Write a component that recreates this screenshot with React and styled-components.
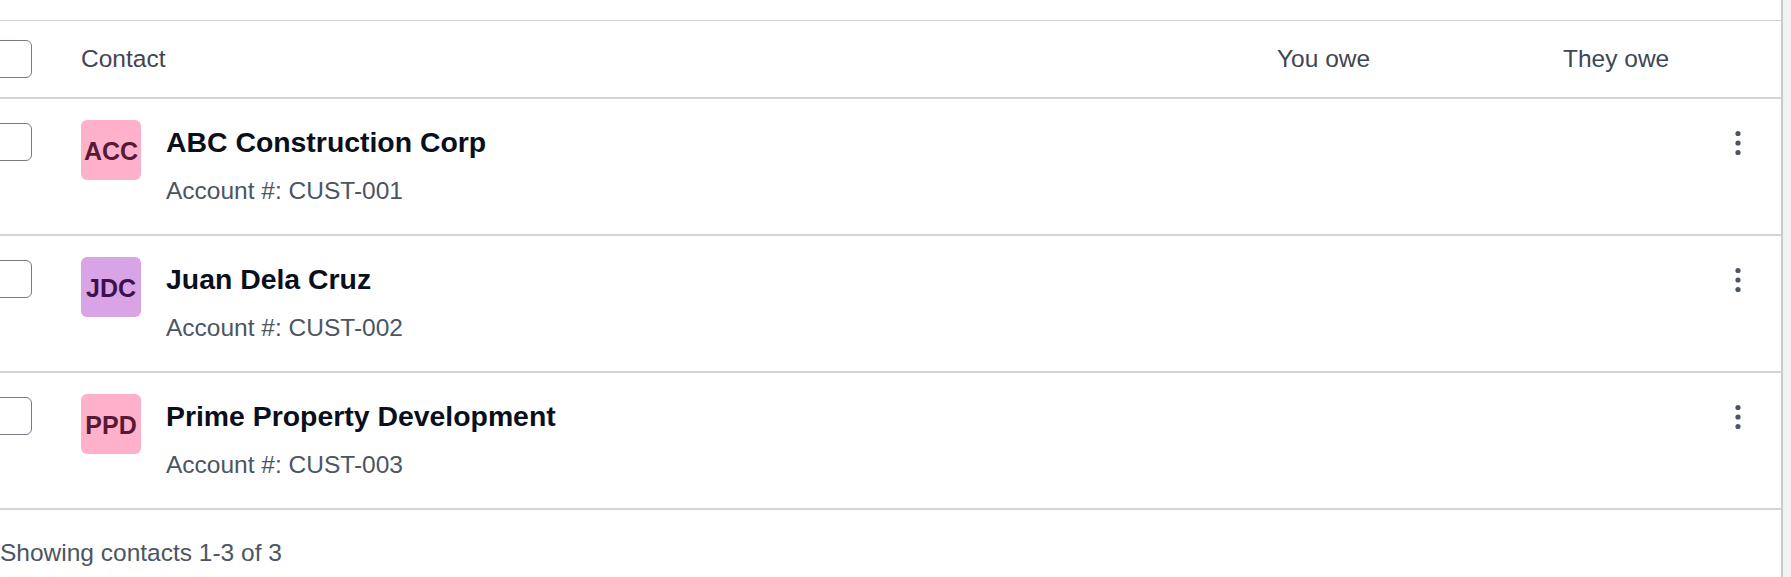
import React from 'react';
import styled, { createGlobalStyle } from 'styled-components';

const GlobalStyle = createGlobalStyle`
    html, body {
        margin: 0;
        padding: 0;
        background: #f1f2f5;
        font-family: "Liberation Sans", Arial, sans-serif;
        overflow: hidden;
    }
`;

const Page = styled.div`
    display: flex;
    height: 577px;
`;

const Panel = styled.div`
    width: 1783px;
    flex: none;
    background: #ffffff;
    border-right: 2px solid #c9cacf;
    padding-top: 20px;
    box-sizing: border-box;
    overflow: hidden;
`;

const Table = styled.div`
    width: 1789px;
    margin-left: -6px;
    border-top: 1px solid #d4d4d8;
`;

const Row = styled.div`
    display: grid;
    grid-template-columns: 87px 1196px 286px 1fr 80px;
    align-items: ${props => (props.$head ? 'center' : 'start')};
    height: ${props => (props.$head ? '76px' : '135px')};
    border-bottom: 2px solid #d4d4d8;
`;

const Checkbox = styled.span`
    display: block;
    width: 38px;
    height: 38px;
    box-sizing: border-box;
    border: 1px solid #7a7a85;
    border-radius: 6px;
    background: #fff;
    margin-top: ${props => (props.$head ? '0' : '24px')};
`;

const HeadCell = styled.div`
    font-size: 24.5px;
    line-height: 36px;
    color: #3f4654;
`;

const ContactCell = styled.div`
    display: flex;
    align-items: flex-start;
    gap: 25px;
    padding-top: 21px;
`;

const Avatar = styled.div`
    width: 60px;
    height: 60px;
    flex: none;
    border-radius: 6px;
    background: ${props => props.$bg};
    color: ${props => props.$fg};
    display: flex;
    align-items: center;
    justify-content: center;
    font-weight: 700;
    font-size: 25px;
    padding-top: 2px;
    box-sizing: border-box;
`;

const Info = styled.div`
    display: flex;
    flex-direction: column;
    gap: 9px;
`;

const Name = styled.div`
    font-size: 28.4px;
    line-height: 44px;
    font-weight: 700;
    color: #0a0f1c;
`;

const Account = styled.div`
    font-size: 24.5px;
    line-height: 36px;
    color: #4b5563;
`;

const Actions = styled.div`
    display: flex;
    justify-content: center;
    padding-right: 10px;
    margin-top: 28px;
`;

const MenuButton = styled.button`
    border: 0;
    background: none;
    padding: 0;
    width: 32px;
    height: 32px;
    color: #4b5563;
    display: flex;
    align-items: center;
    justify-content: center;
`;

const Footer = styled.div`
    padding-top: 25px;
    font-size: 24.5px;
    line-height: 36px;
    color: #4b5563;
`;

const contacts = [
    { id: 1, initials: 'ACC', name: 'ABC Construction Corp', account: 'CUST-001', bg: '#ffb1cc', fg: '#581a33' },
    { id: 2, initials: 'JDC', name: 'Juan Dela Cruz', account: 'CUST-002', bg: '#d9a4e5', fg: '#3d1150' },
    { id: 3, initials: 'PPD', name: 'Prime Property Development', account: 'CUST-003', bg: '#ffb1cc', fg: '#581a33' },
];

const Kebab = () => (
    <svg width="32" height="32" viewBox="0 0 32 32" fill="currentColor">
        <circle cx="16" cy="6.5" r="2.6" />
        <circle cx="16" cy="16" r="2.6" />
        <circle cx="16" cy="25.5" r="2.6" />
    </svg>
);

const App = () => (
    <Page>
        <GlobalStyle />
        <Panel>
            <Table>
                <Row $head>
                    <Checkbox $head />
                    <HeadCell>Contact</HeadCell>
                    <HeadCell>You owe</HeadCell>
                    <HeadCell>They owe</HeadCell>
                    <div />
                </Row>
                {contacts.map(contact => (
                    <Row key={contact.id}>
                        <Checkbox />
                        <ContactCell>
                            <Avatar $bg={contact.bg} $fg={contact.fg}>
                                {contact.initials}
                            </Avatar>
                            <Info>
                                <Name>{contact.name}</Name>
                                <Account>Account #: {contact.account}</Account>
                            </Info>
                        </ContactCell>
                        <div />
                        <div />
                        <Actions>
                            <MenuButton aria-label="More actions">
                                <Kebab />
                            </MenuButton>
                        </Actions>
                    </Row>
                ))}
            </Table>
            <Footer>Showing contacts 1-3 of 3</Footer>
        </Panel>
    </Page>
);

export default App;
